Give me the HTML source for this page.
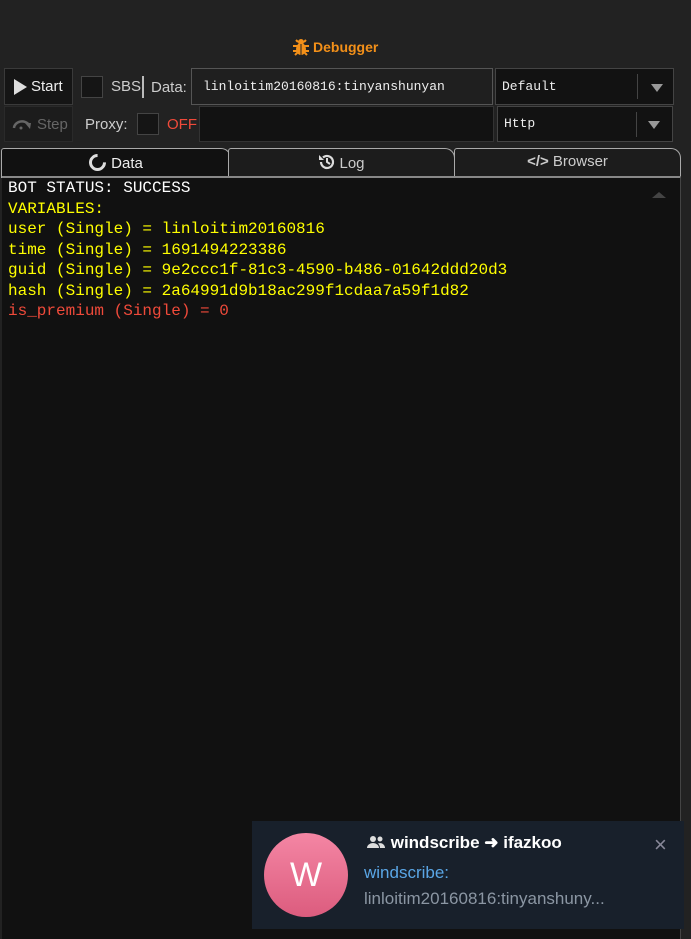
<!DOCTYPE html>
<html><head><meta charset="utf-8"><style>
*{box-sizing:border-box;margin:0;padding:0}
body{width:691px;height:939px;background:#222;position:relative;overflow:hidden;font-family:"Liberation Sans",sans-serif;color:#ddd}
.a{position:absolute}
.btn{background:#151515;border:1px solid #3a3a3a}
.mono{font-family:"Liberation Mono",monospace}
.cb{width:22px;height:22px;background:#151515;border:1px solid #444}
.tri{width:0;height:0;border-left:6px solid transparent;border-right:6px solid transparent;border-top:8px solid #999}
</style></head><body>
<div class="a" style="left:292px;top:38px;color:#f39019;font-weight:bold;font-size:14px;display:flex;align-items:center;gap:3px">
<svg width="18" height="18" viewBox="0 0 18 18"><ellipse cx="9" cy="11" rx="5" ry="6" fill="#f39019"/><circle cx="9" cy="4" r="3" fill="#f39019"/><path d="M1 8h16M1 13h16M3 17l3-3M15 17l-3-3M4 2l2 2M14 2l-2 2" stroke="#f39019" stroke-width="2"/><path d="M9 6v11" stroke="#222" stroke-width="1"/></svg>Debugger</div>
<div class="a btn" style="left:4px;top:68px;width:69px;height:37px;display:flex;align-items:center;padding-left:9px;font-size:15px;color:#eee"><span style="width:0;height:0;border-top:8px solid transparent;border-bottom:8px solid transparent;border-left:13px solid #ddd;margin-right:4px"></span>Start</div>
<div class="a btn" style="left:4px;top:106px;width:69px;height:36px;display:flex;align-items:center;padding-left:7px;font-size:15px;color:#666;background:#1c1c1c;border-color:#2a2a2a"><svg width="22" height="12" viewBox="0 0 22 12" style="margin-right:3px"><path d="M2 10a8 7 0 0 1 15-3" stroke="#666" stroke-width="2.5" fill="none"/><path d="M13 5l6 0l-1 6z" fill="#666"/><circle cx="9" cy="10" r="1.5" fill="#666"/></svg>Step</div>
<div class="a cb" style="left:81px;top:76px"></div>
<div class="a" style="left:111px;top:78px;font-size:15px;color:#ccc">SBS</div>
<div class="a" style="left:142px;top:76px;width:2px;height:22px;background:#bbb"></div>
<div class="a" style="left:151px;top:79px;font-size:15px;color:#ccc">Data:</div>
<div class="a mono" style="left:191px;top:68px;width:302px;height:37px;background:#1f1f1f;border:1px solid #555;font-size:13px;color:#eee;padding:10px 0 0 11px">linloitim20160816:tinyanshunyan</div>
<div class="a btn" style="left:495px;top:68px;width:179px;height:37px;border-color:#444;background:#121212"><span class="a mono" style="left:6px;top:10px;font-size:13px;color:#eee">Default</span><div class="a" style="left:141px;top:5px;width:1px;height:25px;background:#444"></div><div class="a tri" style="left:155px;top:15px"></div></div>
<div class="a" style="left:85px;top:116px;font-size:15px;color:#ccc">Proxy:</div>
<div class="a cb" style="left:137px;top:113px"></div>
<div class="a" style="left:167px;top:116px;font-size:15px;color:#f04a3a">OFF</div>
<div class="a btn" style="left:199px;top:106px;width:295px;height:36px;border-color:#333;background:#121212"></div>
<div class="a btn" style="left:497px;top:106px;width:176px;height:36px;border-color:#444;background:#121212"><span class="a mono" style="left:6px;top:9px;font-size:13px;color:#eee">Http</span><div class="a" style="left:138px;top:5px;width:1px;height:25px;background:#444"></div><div class="a tri" style="left:150px;top:14px"></div></div>
<div class="a" style="left:1px;top:148px;width:230px;height:30px;background:#111;border:1px solid #aaa;border-bottom:none;border-radius:3px 10px 0 0;font-size:15px;color:#eee;text-align:center;padding-top:5px"><span style="display:inline-block;width:17px;height:17px;border:3px solid #ddd;border-right-color:transparent;border-radius:50%;vertical-align:-3px;margin-right:5px;transform:rotate(-45deg)"></span>Data</div>
<div class="a" style="left:228px;top:148px;width:227px;height:28px;background:#1c1c1c;border:1px solid #aaa;border-bottom:none;border-radius:3px 10px 0 0;font-size:15px;color:#ccc;text-align:center;padding-top:4px"><svg width="18" height="18" viewBox="0 0 18 18" style="vertical-align:-3px;margin-right:3px"><path d="M3 9a6 6 0 1 0 2-4.5" stroke="#ddd" stroke-width="2.2" fill="none"/><path d="M1 2v5h5z" fill="#ddd"/><path d="M9 5v4l3 2" stroke="#ddd" stroke-width="2" fill="none"/></svg>Log</div>
<div class="a" style="left:454px;top:148px;width:227px;height:28px;background:#1c1c1c;border:1px solid #aaa;border-bottom:none;border-radius:3px 10px 0 0;font-size:15px;color:#ccc;text-align:center;padding-top:4px"><b>&lt;/&gt;</b> Browser</div>
<div class="a" style="left:2px;top:176px;width:679px;height:763px;background:#111;border-top:2px solid #888;border-right:1px solid #444"></div>
<div class="a" style="left:652px;top:192px;width:0;height:0;border-left:7px solid transparent;border-right:7px solid transparent;border-bottom:6px solid #444"></div>
<div class="a mono" style="left:8px;top:178px;font-size:16px;line-height:20.5px;white-space:pre"><div style="color:#fff">BOT STATUS: SUCCESS</div><div style="color:#ff0">VARIABLES:</div><div style="color:#ff0">user (Single) = linloitim20160816</div><div style="color:#ff0">time (Single) = 1691494223386</div><div style="color:#ff0">guid (Single) = 9e2ccc1f-81c3-4590-b486-01642ddd20d3</div><div style="color:#ff0">hash (Single) = 2a64991d9b18ac299f1cdaa7a59f1d82</div><div style="color:#f04a3a">is_premium (Single) = 0</div></div>
<div class="a" style="left:252px;top:821px;width:432px;height:108px;background:#18202b">
<div class="a" style="left:12px;top:12px;width:84px;height:84px;border-radius:50%;background:linear-gradient(#f486a4,#dc5c7e);color:#fff;font-size:34px;text-align:center;line-height:84px">W</div>
<div class="a" style="left:114px;top:12px;color:#fff;font-weight:bold;font-size:17px"><svg width="20" height="14" viewBox="0 0 20 14" style="vertical-align:-1px"><circle cx="7" cy="4" r="3" fill="#ddd"/><circle cx="14" cy="4" r="2.5" fill="#ddd"/><path d="M1 13a6 5 0 0 1 12 0z" fill="#ddd"/><path d="M14 13h5a5 5 0 0 0-7-4.5a6 6 0 0 1 2 4.5z" fill="#ddd"/></svg> windscribe ➜ ifazkoo</div>
<div class="a" style="left:112px;top:42px;color:#5aa6e6;font-size:17px">windscribe:</div>
<div class="a" style="left:112px;top:68px;color:#8b96a3;font-size:17px">linloitim20160816:tinyanshuny...</div>
<div class="a" style="left:402px;top:11px;color:#889;font-size:22px">×</div>
</div>
</body></html>
